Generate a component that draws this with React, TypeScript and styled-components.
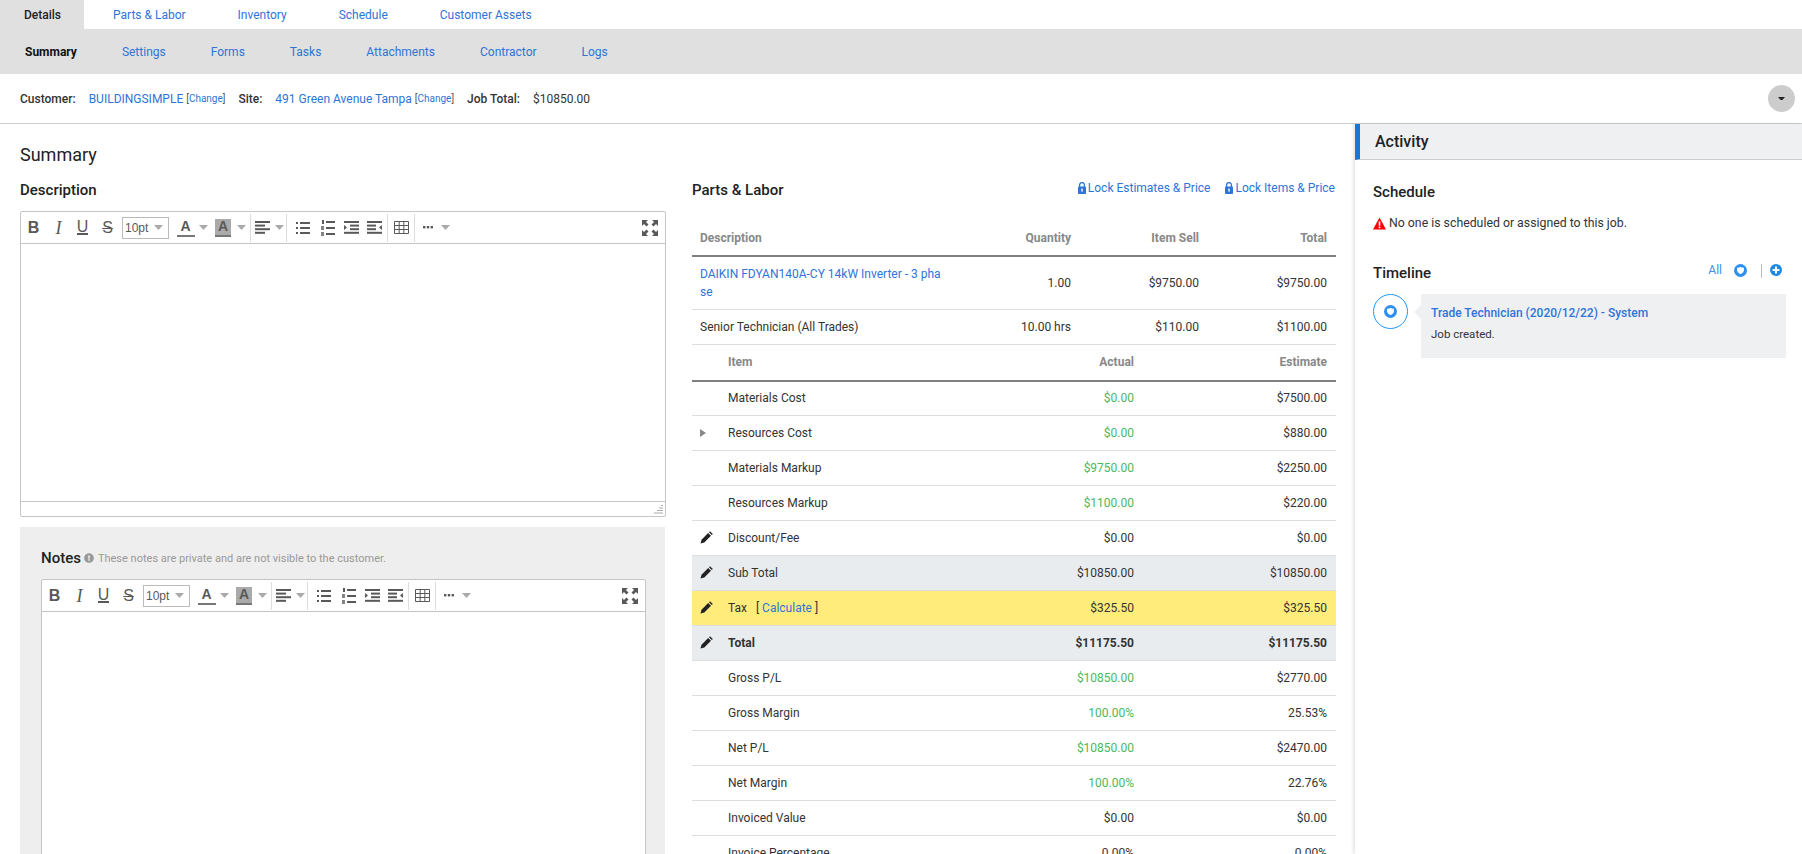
import * as React from "react";
import styled, { createGlobalStyle } from "styled-components";
import { FaExclamationCircle } from "react-icons/fa";

const Blue = "#2f74d8";
const Green = "#4cb85c";
const Ink = "#333";

const GlobalStyle = createGlobalStyle`
  html, body { margin: 0; padding: 0; background: #fff; }
  body { font-family: Roboto, "Liberation Sans", sans-serif; font-size: 12px; color: ${Ink}; }
  * { box-sizing: border-box; }
`;

const Page = styled.div`
  width: 100%;
  height: 100vh;
  overflow: hidden;
  display: flex;
  flex-direction: column;
`;

const TopTabs = styled.nav`
  display: flex;
  height: 29px;
  flex: none;
`;

const TopTab = styled.a<{ $active?: boolean }>`
  display: flex;
  align-items: center;
  width: ${p => (p.$active ? "84px" : "auto")};
  padding: 0 23px 0 ${p => (p.$active ? "24px" : "26px")};
  margin-left: ${p => (p.$active ? "0" : "3px")};
  background: ${p => (p.$active ? "#e0e0e0" : "transparent")};
  color: ${p => (p.$active ? "#222" : Blue)};
  font-weight: ${p => (p.$active ? 500 : 400)};
`;

const SubTabs = styled.nav`
  display: flex;
  align-items: center;
  height: 45px;
  flex: none;
  background: #e0e0e0;
  padding-left: 25px;
  gap: 45px;
`;

const SubTab = styled.a<{ $active?: boolean }>`
  color: ${p => (p.$active ? "#111" : Blue)};
  font-weight: ${p => (p.$active ? 700 : 400)};
`;

const InfoBar = styled.div`
  display: flex;
  align-items: center;
  height: 50px;
  flex: none;
  padding: 0 7px 0 20px;
  border-bottom: 1px solid #ccc;
`;

const InfoLabel = styled.span`
  font-weight: 500;
  color: #333;
  margin-left: 13px;
  &:first-child { margin-left: 0; }
`;

const InfoLink = styled.a`
  color: ${Blue};
  margin-left: 13px;
`;

const InfoValue = styled.span`
  margin-left: 13px;
`;

const ChangeLink = styled.a`
  font-size: 10px;
  color: #555;
  margin-left: 3px;
  span { color: ${Blue}; }
`;

const RoundButton = styled.button`
  margin-left: auto;
  width: 27px;
  height: 27px;
  border: 0;
  border-radius: 50%;
  background: #ccc;
  display: flex;
  align-items: center;
  justify-content: center;
  padding: 0;
`;

const Main = styled.div`
  flex: 1;
  min-height: 0;
  display: flex;
`;

const Content = styled.main`
  width: 1355px;
  flex: none;
  padding: 20px 0 0 20px;
`;

const PageTitle = styled.h2`
  margin: 0 0 15px;
  font-size: 18px;
  line-height: 22px;
  font-weight: 400;
  color: #222;
`;

const Columns = styled.div`
  display: grid;
  grid-template-columns: 646px 644px;
  column-gap: 26px;
`;

const SectionTitle = styled.h3`
  margin: 0;
  font-size: 15px;
  line-height: 18px;
  font-weight: 500;
  color: #222;
`;

const EditorFrame = styled.div`
  margin-top: 12px;
  border: 1px solid #c5c5c5;
  border-radius: 2px;
  background: #fff;
`;

const Toolbar = styled.div`
  display: flex;
  align-items: center;
  height: 32px;
  border-bottom: 1px solid #c5c5c5;
`;

const ToolButton = styled.span<{ $w?: number; $ml?: number }>`
  display: flex;
  align-items: center;
  justify-content: center;
  flex: none;
  width: ${p => p.$w ?? 25}px;
  margin-left: ${p => p.$ml ?? 0}px;
  height: 24px;
  color: #595959;
  font-family: "Liberation Sans", Arial, sans-serif;
  font-size: 16px;
  line-height: 1;
`;

const BoldGlyph = styled.b`
  font-weight: 700;
`;

const ItalicGlyph = styled.i`
  font-style: italic;
  font-family: "Liberation Serif", serif;
  font-size: 18px;
`;

const UnderGlyph = styled.span`
  border-bottom: 2px solid #595959;
  line-height: 13px;
  height: 15px;
`;

const StrikeGlyph = styled.span`
  text-decoration: line-through;
`;

const ColorGlyph = styled.span<{ $filled?: boolean }>`
  display: block;
  width: ${p => (p.$filled ? 16 : 18)}px;
  height: 18px;
  text-align: center;
  font-size: 14px;
  font-weight: 700;
  line-height: 15px;
  background: ${p => (p.$filled ? "#aaa" : "transparent")};
  border-bottom: 2px solid #777;
  color: #595959;
`;

const SizeSelect = styled.span`
  display: flex;
  align-items: center;
  justify-content: space-between;
  flex: none;
  width: 47px;
  height: 22px;
  margin-left: 2px;
  padding: 0 5px 0 2px;
  border: 1px solid #bbb;
  font-family: "Liberation Sans", Arial, sans-serif;
  font-size: 12px;
  color: #595959;
`;

const Separator = styled.span`
  flex: none;
  width: 1px;
  height: 28px;
  margin: 0 1px;
  background: #ddd;
`;

const Grow = styled.span`
  flex: 1;
`;

const EditorBody = styled.div<{ $h: number }>`
  height: ${p => p.$h}px;
  background: #fff;
`;

const StatusBar = styled.div`
  height: 15px;
  border-top: 1px solid #c5c5c5;
  display: flex;
  justify-content: flex-end;
  align-items: flex-end;
  padding: 0 2px 2px 0;
`;

const NotesPanel = styled.section`
  margin-top: 10px;
  padding: 22px 19px 40px 21px;
  background: #eee;
  width: 645px;
`;

const NotesHead = styled.div`
  display: flex;
  align-items: center;
`;

const NotesHint = styled.span`
  font-size: 11px;
  color: #999;
  margin-left: 3px;
  display: flex;
  align-items: center;
  gap: 4px;
`;

const PartsHead = styled.div`
  display: flex;
  justify-content: space-between;
  height: 40px;
`;

const LockLinks = styled.div`
  display: flex;
  gap: 15px;
  height: 14px;
  margin-right: 1px;
`;

const LockLink = styled.a`
  display: flex;
  align-items: center;
  gap: 2px;
  color: ${Blue};
`;

const Table = styled.table`
  width: 644px;
  table-layout: fixed;
  border-collapse: collapse;
`;

const Th = styled.th<{ $left?: boolean; $h?: number }>`
  padding: 0 8px;
  height: ${p => p.$h ?? 35}px;
  font-size: 12px;
  font-weight: 700;
  color: #888;
  text-align: ${p => (p.$left ? "left" : "right")};
  border-bottom: 2px solid #808080;
  &:last-child { padding-right: 9px; }
`;

const Tr = styled.tr<{ $tone?: "grey" | "yellow" }>`
  background: ${p => (p.$tone === "grey" ? "#e9ecef" : p.$tone === "yellow" ? "#ffec7a" : "transparent")};
`;

const Td = styled.td<{ $left?: boolean; $green?: boolean; $bold?: boolean; $h?: number }>`
  padding: 0 8px;
  height: ${p => p.$h ?? 35}px;
  text-align: ${p => (p.$left ? "left" : "right")};
  color: ${p => (p.$green ? Green : Ink)};
  font-weight: ${p => (p.$bold ? 700 : 400)};
  border-bottom: 1px solid #ddd;
  vertical-align: middle;
  &:last-child { padding-right: 9px; }
`;

const IconCell = styled(Td)`
  padding: 0 0 0 8px;
  color: #222;
  svg { display: block; }
`;

const PencilSvg = styled.svg`
  margin-top: -2px;
`;

const ItemLink = styled.a`
  display: block;
  width: 246px;
  color: ${Blue};
  line-height: 18px;
  word-break: break-all;
`;

const CalcLink = styled.a`
  color: ${Blue};
`;

const Activity = styled.aside`
  flex: 1;
  min-width: 0;
  box-shadow: -2px 0 3px rgba(0, 0, 0, 0.1);
`;

const ActivityHead = styled.div`
  height: 36px;
  display: flex;
  align-items: center;
  padding-left: 15px;
  background: #eff0f2;
  border-left: 5px solid #1976d2;
  border-bottom: 1px solid #ccc;
  font-size: 16px;
  font-weight: 500;
  color: #222;
`;

const ActivityBody = styled.div`
  padding: 23px 16px 0 18px;
`;

const ActivityTitle = styled.h4`
  margin: 0;
  font-size: 15px;
  line-height: 18px;
  font-weight: 500;
  color: #222;
`;

const Warning = styled.div`
  display: flex;
  align-items: center;
  gap: 3px;
  margin-top: 13px;
  font-size: 12.3px;
  line-height: 18px;
  color: #333;
`;

const TimelineHead = styled.div`
  display: flex;
  align-items: center;
  justify-content: space-between;
  margin-top: 32px;
`;

const TimelineActions = styled.div`
  display: flex;
  align-items: center;
  gap: 12px;
  margin: -6px 4px 0 0;
  color: #3d8fef;
  font-size: 12px;
`;

const ActionRule = styled.span`
  width: 1px;
  height: 14px;
  margin: 2px -4px 0 2px;
  background: #bbb;
`;

const TimelineItem = styled.div`
  display: flex;
  margin-top: 12px;
`;

const Bubble = styled.div`
  flex: none;
  width: 35px;
  height: 35px;
  border: 1px solid #2196f3;
  border-radius: 50%;
  display: flex;
  align-items: center;
  justify-content: center;
`;

const Card = styled.div`
  position: relative;
  flex: 1;
  margin-left: 13px;
  height: 64px;
  padding: 11px 10px 0;
  background: #eff0f2;
  &::before {
    content: "";
    position: absolute;
    left: -7px;
    top: 11px;
    border-style: solid;
    border-width: 7px 7px 7px 0;
    border-color: transparent #eff0f2 transparent transparent;
  }
`;

const CardTitle = styled.a`
  display: block;
  font-size: 12px;
  line-height: 16px;
  font-weight: 500;
  color: ${Blue};
`;

const CardText = styled.p`
  margin: 6px 0 0;
  font-size: 11.5px;
  line-height: 14px;
  color: #333;
`;

const Caret = ({ color = "#aaa", w = 9 }: { color?: string; w?: number }) => (
  <svg width={w} height={(w * 5) / 9} viewBox="0 0 9 5"><path d="M0 0h9L4.5 5z" fill={color} /></svg>
);

const AlignIcon = () => (
  <svg width="15" height="13" viewBox="0 0 15 13" fill="#595959">
    <rect width="15" height="2" /><rect y="3.6" width="10" height="2" /><rect y="7.2" width="15" height="2" /><rect y="10.8" width="10" height="2" />
  </svg>
);

const BulletIcon = () => (
  <svg width="14" height="14" viewBox="0 0 14 14" fill="#595959">
    <rect width="2" height="2" y="1" /><rect x="4" y="1" width="10" height="2" />
    <rect width="2" height="2" y="6" /><rect x="4" y="6" width="10" height="2" />
    <rect width="2" height="2" y="11" /><rect x="4" y="11" width="10" height="2" />
  </svg>
);

const NumberIcon = () => (
  <svg width="14" height="16" viewBox="0 0 14 16" fill="#595959">
    <rect x="1" y="0" width="2" height="4" /><rect y="6" width="3" height="4" opacity=".75" /><rect y="12" width="3" height="4" opacity=".75" />
    <rect x="5" y="1" width="9" height="2" /><rect x="5" y="7" width="9" height="2" /><rect x="5" y="13" width="9" height="2" />
  </svg>
);

const OutdentIcon = () => (
  <svg width="15" height="13" viewBox="0 0 15 13" fill="#595959">
    <rect width="15" height="2" /><rect x="6" y="3.6" width="9" height="2" /><rect x="6" y="7.2" width="9" height="2" /><rect y="10.8" width="15" height="2" />
    <path d="M0 4l3 2.5L0 9z" />
  </svg>
);

const IndentIcon = () => (
  <svg width="15" height="13" viewBox="0 0 15 13" fill="#595959">
    <rect width="15" height="2" /><rect y="3.6" width="9" height="2" /><rect y="7.2" width="9" height="2" /><rect y="10.8" width="15" height="2" />
    <path d="M15 4l-3 2.5L15 9z" />
  </svg>
);

const TableIcon = () => (
  <svg width="15" height="13" viewBox="0 0 15 13" fill="none" stroke="#595959">
    <path d="M.5.5h14v12H.5zM.5 4.5h14M.5 8.5h14M5.2.5v12M9.8.5v12" />
  </svg>
);

const DotsIcon = () => (
  <svg width="10" height="3" viewBox="0 0 10 3" fill="#595959">
    <rect width="2.4" height="2.4" /><rect x="3.8" width="2.4" height="2.4" /><rect x="7.6" width="2.4" height="2.4" />
  </svg>
);

const FullscreenIcon = () => (
  <svg width="16" height="16" viewBox="0 0 16 16" fill="#595959">
    <path d="M0 0h6L4 2l2.5 2.5-2 2L2 4 0 6zM16 0v6l-2-2-2.5 2.5-2-2L12 2l-2-2zM0 16v-6l2 2 2.5-2.5 2 2L4 14l2 2zM16 16h-6l2-2-2.5-2.5 2-2L14 12l2-2z" />
  </svg>
);

const ResizeIcon = () => (
  <svg width="9" height="9" viewBox="0 0 9 9" fill="#aaa">
    <rect x="7" y="0" width="2" height="1" /><rect x="5" y="2.5" width="4" height="1" /><rect x="3" y="5" width="6" height="1" /><rect x="0" y="7.5" width="9" height="1" />
  </svg>
);

const LockIcon = () => (
  <svg width="8" height="12" viewBox="0 0 8 12">
    <path d="M1.6 5V3a2.4 2.4 0 0 1 4.8 0v2" fill="none" stroke={Blue} strokeWidth="1.3" />
    <rect y="4.6" width="8" height="7.4" rx=".8" fill={Blue} />
    <rect x="3.3" y="6.6" width="1.4" height="3" fill="#fff" />
  </svg>
);

const WarnIcon = () => (
  <svg width="13" height="13" viewBox="0 0 13 13">
    <path d="M6.5.5L13 12.6H0z" fill="#f00" />
    <rect x="5.7" y="4.4" width="1.6" height="4.4" fill="#fff" />
    <rect x="5.7" y="9.6" width="1.6" height="1.6" fill="#fff" />
  </svg>
);

const ShieldIcon = () => (
  <svg width="13" height="13" viewBox="0 0 13 13">
    <circle cx="6.5" cy="6.5" r="6.5" fill="#2f8ff0" />
    <path d="M3.2 3.600l1.600.1 1.700-.9 1.700.9 1.600-.1.2 3-1 1.900-2.500 1.700-2.500-1.700-1-1.900z" fill="#fff" />
  </svg>
);

const PlusIcon = () => (
  <svg width="12" height="12" viewBox="0 0 12 12">
    <circle cx="6" cy="6" r="6" fill="#1e88e5" />
    <path d="M5 2.600h2V5h2.400v2H7v2.400H5V7H2.600V5H5z" fill="#fff" />
  </svg>
);

const ExpandIcon = () => (
  <svg width="6" height="8" viewBox="0 0 6 8"><path d="M0 0l6 4-6 4z" fill="#888" /></svg>
);

const PencilIcon = () => (
  <PencilSvg width="13" height="13" viewBox="0 0 13 13">
    <path d="M.5 12.500l1-3.800 6.700-6.700 2.800 2.800-6.700 6.700z" fill="#222" />
    <path d="M9 1.200l1-1 2.800 2.800-1 1z" fill="#222" />
  </PencilSvg>
);

const Editor = ({ height, status }: { height: number; status?: boolean }) => (
  <EditorFrame>
    <Toolbar>
      <ToolButton><BoldGlyph>B</BoldGlyph></ToolButton>
      <ToolButton><ItalicGlyph>I</ItalicGlyph></ToolButton>
      <ToolButton $ml={-1}><UnderGlyph>U</UnderGlyph></ToolButton>
      <ToolButton><StrikeGlyph>S</StrikeGlyph></ToolButton>
      <SizeSelect>10pt <Caret /></SizeSelect>
      <ToolButton $w={23} $ml={5}><ColorGlyph>A</ColorGlyph></ToolButton>
      <ToolButton $w={12}><Caret /></ToolButton>
      <ToolButton $w={24} $ml={2}><ColorGlyph $filled>A</ColorGlyph></ToolButton>
      <ToolButton $w={12}><Caret /></ToolButton>
      <ToolButton $w={2} />
      <Separator />
      <ToolButton $w={21}><AlignIcon /></ToolButton>
      <ToolButton $w={12}><Caret /></ToolButton>
      <Separator />
      <ToolButton $ml={2}><BulletIcon /></ToolButton>
      <ToolButton><NumberIcon /></ToolButton>
      <ToolButton $w={23}><OutdentIcon /></ToolButton>
      <ToolButton $w={23}><IndentIcon /></ToolButton>
      <Separator />
      <ToolButton $w={24}><TableIcon /></ToolButton>
      <Separator />
      <ToolButton $w={24}><DotsIcon /></ToolButton>
      <ToolButton $w={10}><Caret /></ToolButton>
      <Grow />
      <ToolButton $w={30}><FullscreenIcon /></ToolButton>
    </Toolbar>
    <EditorBody $h={height} />
    {status && <StatusBar><ResizeIcon /></StatusBar>}
  </EditorFrame>
);

const costRows: { label: string; actual: string; estimate: string; icon?: "pencil" | "expand"; green?: boolean; tone?: "grey" | "yellow"; bold?: boolean; tax?: boolean }[] = [
  { label: "Materials Cost", actual: "$0.00", estimate: "$7500.00", green: true },
  { label: "Resources Cost", actual: "$0.00", estimate: "$880.00", green: true, icon: "expand" },
  { label: "Materials Markup", actual: "$9750.00", estimate: "$2250.00", green: true },
  { label: "Resources Markup", actual: "$1100.00", estimate: "$220.00", green: true },
  { label: "Discount/Fee", actual: "$0.00", estimate: "$0.00", icon: "pencil" },
  { label: "Sub Total", actual: "$10850.00", estimate: "$10850.00", icon: "pencil", tone: "grey" },
  { label: "Tax", actual: "$325.50", estimate: "$325.50", icon: "pencil", tone: "yellow", tax: true },
  { label: "Total", actual: "$11175.50", estimate: "$11175.50", icon: "pencil", tone: "grey", bold: true },
  { label: "Gross P/L", actual: "$10850.00", estimate: "$2770.00", green: true },
  { label: "Gross Margin", actual: "100.00%", estimate: "25.53%", green: true },
  { label: "Net P/L", actual: "$10850.00", estimate: "$2470.00", green: true },
  { label: "Net Margin", actual: "100.00%", estimate: "22.76%", green: true },
  { label: "Invoiced Value", actual: "$0.00", estimate: "$0.00" },
  { label: "Invoice Percentage", actual: "0.00%", estimate: "0.00%" },
];

export default function App() {
  return (
    <Page>
      <GlobalStyle />
      <TopTabs>
        <TopTab $active>Details</TopTab>
        <TopTab>Parts &amp; Labor</TopTab>
        <TopTab>Inventory</TopTab>
        <TopTab>Schedule</TopTab>
        <TopTab>Customer Assets</TopTab>
      </TopTabs>
      <SubTabs>
        <SubTab $active>Summary</SubTab>
        <SubTab>Settings</SubTab>
        <SubTab>Forms</SubTab>
        <SubTab>Tasks</SubTab>
        <SubTab>Attachments</SubTab>
        <SubTab>Contractor</SubTab>
        <SubTab>Logs</SubTab>
      </SubTabs>
      <InfoBar>
        <InfoLabel>Customer:</InfoLabel>
        <InfoLink>BUILDINGSIMPLE</InfoLink>
        <ChangeLink>[<span>Change</span>]</ChangeLink>
        <InfoLabel>Site:</InfoLabel>
        <InfoLink>491 Green Avenue Tampa</InfoLink>
        <ChangeLink>[<span>Change</span>]</ChangeLink>
        <InfoLabel>Job Total:</InfoLabel>
        <InfoValue>$10850.00</InfoValue>
        <RoundButton><Caret color="#222" w={7} /></RoundButton>
      </InfoBar>
      <Main>
        <Content>
          <PageTitle>Summary</PageTitle>
          <Columns>
            <div>
              <SectionTitle>Description</SectionTitle>
              <Editor height={257} status />
              <NotesPanel>
                <NotesHead>
                  <SectionTitle>Notes</SectionTitle>
                  <NotesHint>
                    <FaExclamationCircle size={10} color="#999" />
                    These notes are private and are not visible to the customer.
                  </NotesHint>
                </NotesHead>
                <Editor height={400} />
              </NotesPanel>
            </div>
            <div>
              <PartsHead>
                <SectionTitle>Parts &amp; Labor</SectionTitle>
                <LockLinks>
                  <LockLink><LockIcon />Lock Estimates &amp; Price</LockLink>
                  <LockLink><LockIcon />Lock Items &amp; Price</LockLink>
                </LockLinks>
              </PartsHead>
              <Table>
                <colgroup><col width="258" /><col width="129" /><col width="128" /><col width="129" /></colgroup>
                <thead>
                  <tr><Th $left>Description</Th><Th>Quantity</Th><Th>Item Sell</Th><Th>Total</Th></tr>
                </thead>
                <tbody>
                  <Tr>
                    <Td $left $h={53}><ItemLink>DAIKIN FDYAN140A-CY 14kW Inverter - 3 phase</ItemLink></Td>
                    <Td $h={53}>1.00</Td><Td $h={53}>$9750.00</Td><Td $h={53}>$9750.00</Td>
                  </Tr>
                  <Tr>
                    <Td $left>Senior Technician (All Trades)</Td>
                    <Td>10.00 hrs</Td><Td>$110.00</Td><Td>$1100.00</Td>
                  </Tr>
                </tbody>
              </Table>
              <Table>
                <colgroup><col width="28" /><col width="298" /><col width="124" /><col width="194" /></colgroup>
                <thead>
                  <tr><Th /><Th $left $h={36}>Item</Th><Th $h={36}>Actual</Th><Th $h={36}>Estimate</Th></tr>
                </thead>
                <tbody>
                  {costRows.map(row => (
                    <Tr key={row.label} $tone={row.tone}>
                      <IconCell $left>
                        {row.icon === "pencil" && <PencilIcon />}
                        {row.icon === "expand" && <ExpandIcon />}
                      </IconCell>
                      <Td $left $bold={row.bold}>
                        {row.label}
                        {row.tax && <> &nbsp; [ <CalcLink>Calculate</CalcLink> ]</>}
                      </Td>
                      <Td $green={row.green} $bold={row.bold}>{row.actual}</Td>
                      <Td $bold={row.bold}>{row.estimate}</Td>
                    </Tr>
                  ))}
                </tbody>
              </Table>
            </div>
          </Columns>
        </Content>
        <Activity>
          <ActivityHead>Activity</ActivityHead>
          <ActivityBody>
            <ActivityTitle>Schedule</ActivityTitle>
            <Warning><WarnIcon />No one is scheduled or assigned to this job.</Warning>
            <TimelineHead>
              <ActivityTitle>Timeline</ActivityTitle>
              <TimelineActions>
                All
                <ShieldIcon />
                <ActionRule />
                <PlusIcon />
              </TimelineActions>
            </TimelineHead>
            <TimelineItem>
              <Bubble><ShieldIcon /></Bubble>
              <Card>
                <CardTitle>Trade Technician (2020/12/22) - System</CardTitle>
                <CardText>Job created.</CardText>
              </Card>
            </TimelineItem>
          </ActivityBody>
        </Activity>
      </Main>
    </Page>
  );
}
